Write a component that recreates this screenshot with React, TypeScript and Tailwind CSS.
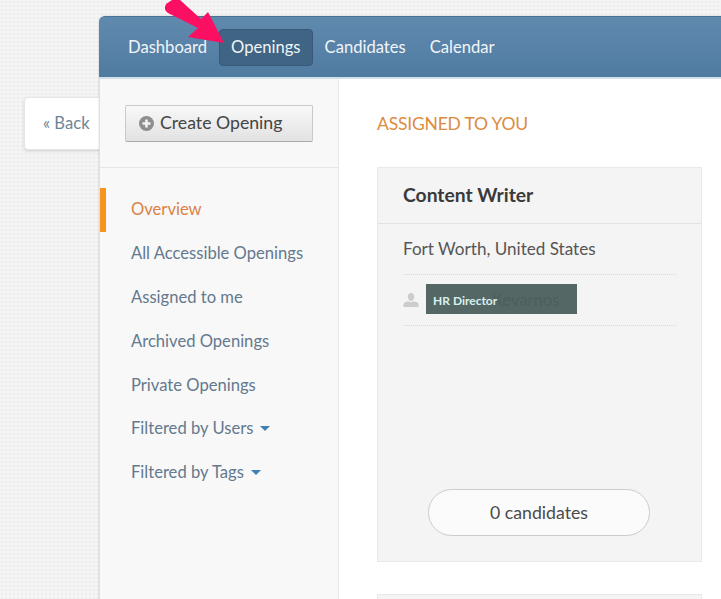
import React from 'react';

const NAV_ITEMS = ['Dashboard', 'Openings', 'Candidates', 'Calendar'];
const SIDE_ITEMS = ['Overview', 'All Accessible Openings', 'Assigned to me', 'Archived Openings', 'Private Openings', 'Filtered by Users', 'Filtered by Tags'];

const Caret = () => <span className="ml-[7px] inline-block w-0 h-0 border-x-[5px] border-x-transparent border-t-[5px] border-t-[#3f80b5] align-middle" />;

export default function App() {
  return (
    <div className="relative h-[599px] w-[721px] overflow-hidden pl-[99px] pt-[16px] bg-[#f4f4f4] bg-[radial-gradient(#ececec_1px,transparent_1px)] bg-[length:4px_4px] font-['Lato','Liberation_Sans',sans-serif] text-[16.6px]">
      {/* back tab */}
      <div className="absolute left-[24px] top-[97px] w-[81px] h-[53px] flex items-center pl-[18px] bg-white rounded-l-[4px] border border-[#e6e6e6] shadow-[0_1px_3px_rgba(0,0,0,0.15)] text-[#6f8597]">
        « Back
      </div>

      <div className="relative w-[640px] h-[600px] flex flex-col rounded-tl-[6px] shadow-[0_0_2px_rgba(0,0,0,0.2)]">
        <header className="h-[63px] shrink-0 flex items-center pl-[17px] pt-[1px] rounded-tl-[6px] border-t border-[#4a7294] border-b-2 border-b-[#cfdfeb] bg-gradient-to-b from-[#6089ae] to-[#507ba0]">
          {NAV_ITEMS.map(item => (
            <div
              key={item}
              className={item === 'Openings'
                ? 'h-[37px] px-[11px] flex items-center rounded-[4px] bg-[#3f6484] border border-[#38597a] text-[#f0f5f9]'
                : 'h-[37px] px-3 flex items-center text-[#f0f5f9]'}
            >
              {item}
            </div>
          ))}
        </header>

        <div className="flex-1 flex min-h-0">
          <aside className="w-[240px] shrink-0 bg-[#f8f8f8] border-l border-l-[#dfe2e5] border-r border-r-[#e6e9ec]">
            <div className="h-[89px] pl-[25px] pt-[26px] border-b border-[#e3e6e9]">
              <button className="w-[188px] h-[37px] flex items-center gap-[6px] pl-[13px] rounded-[2px] border border-[#c9c9c9] border-b-[#aaaaaa] bg-gradient-to-b from-[#f8f8f8] to-[#e2e2e2] text-[17.7px] text-[#444444]">
                <span className="w-[15px] h-[15px] rounded-full bg-[#8e8e8e] flex items-center justify-center">
                  <svg width="9" height="9" viewBox="0 0 9 9"><path d="M3.2 0.5h2.6v2.7h2.7v2.6H5.8v2.7H3.2V5.8H0.5V3.2h2.7z" fill="#f2f2f2" /></svg>
                </span>
                Create Opening
              </button>
            </div>
            <nav className="pt-[20px]">
              {SIDE_ITEMS.map((item, index) => (
                <div
                  key={item}
                  className={index === 0
                    ? 'h-[43.8px] flex items-center pl-[25px] border-l-[6px] border-l-[#f7941d] text-[#dc8245]'
                    : 'h-[43.8px] flex items-center pl-[31px] text-[#64798e]'}
                >
                  {item}
                  {index > 4 && <Caret />}
                </div>
              ))}
            </nav>
          </aside>

          <main className="flex-1 bg-white pl-[38px]">
            <h2 className="h-[88px] pt-[2px] flex items-center text-[17.5px] text-[#dc8c3f] -tracking-[0.2px]">ASSIGNED TO YOU</h2>
            <section className="w-[325px] h-[395px] flex flex-col bg-[#f4f4f4] border border-[#e9e9e9]">
              <h3 className="h-[56px] shrink-0 flex items-center pl-[25px] text-[19.3px] font-bold text-[#3a3a3a] border-b border-[#e2e2e2]">Content Writer</h3>
              <div className="mx-[25px] h-[51px] flex items-center text-[17.1px] text-[#555555] border-b border-dotted border-[#d9d9d9]">Fort Worth, United States</div>
              <div className="relative mx-[25px] h-[51px] flex items-center text-[#555555] border-b border-dotted border-[#d9d9d9]">
                <svg width="16" height="16" viewBox="0 0 16 16">
                  <path d="M8 1c2 0 3.2 1.5 3.2 3.6S10 9 8 9 4.800 6.700 4.800 4.600 6 1 8 1zM5.500 9.300C3 10 .5 10.600.5 12.200V15h15v-2.800c0-1.600-2.500-2.200-5-2.900-.8.600-1.600 1-2.500 1s-1.700-.4-2.500-1z" fill="#cccccc" />
                </svg>
                <span className="pl-[73px]">Kevarnos</span>
                <div className="absolute left-[23px] top-[9px] w-[151px] h-[30px] flex items-center pl-[7px] pt-[3px] bg-[#4b5f5d]/95 text-[12px] font-bold text-[#d9f0ee]">HR Director</div>
              </div>
              <div className="mt-auto mb-[25px] ml-[50px] w-[222px] h-[47px] pt-px flex items-center justify-center rounded-full border border-[#cccccc] bg-[#fbfbfb] text-[17.7px] text-[#4a4a4a]">0 candidates</div>
            </section>
            <section className="mt-[32px] w-[325px] h-[20px] bg-[#f4f4f4] border border-[#e9e9e9]" />
          </main>
        </div>
      </div>

      {/* pink arrow annotation */}
      <svg className="absolute left-[160px] top-0" width="70" height="50" viewBox="0 0 70 50">
        <path d="M20 0 L41 19 L48 12 L64 43 L28 37 L38 28 L8 13 Q3 10 6 4 L12 0 Z" fill="#fb0f63" />
      </svg>
    </div>
  );
}
